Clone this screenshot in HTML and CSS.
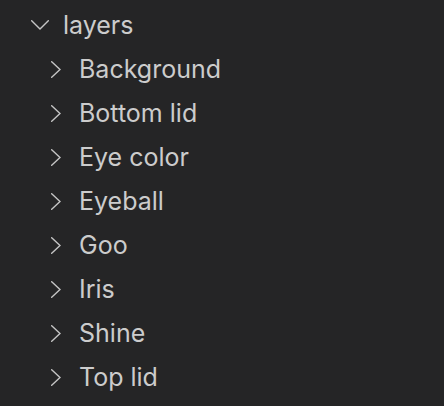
FILE: index.html
```html
<!DOCTYPE html>
<html>
<head>
<meta charset="utf-8">
<link rel="stylesheet" href="styles.css">
</head>
<body>
<div class="tree">
  <div class="row root">
    <svg class="chev-down" width="18" height="10" viewBox="0 0 18 10"><polyline points="0.7,0.7 9,9 17.3,0.7" /></svg>
    <span class="label">layers</span>
  </div>
  <div class="row child">
    <svg class="chev-right" width="10" height="17" viewBox="0 0 10 17"><polyline points="0.7,0.7 9,8.5 0.7,16.3" /></svg>
    <span class="label">Background</span>
  </div>
  <div class="row child">
    <svg class="chev-right" width="10" height="17" viewBox="0 0 10 17"><polyline points="0.7,0.7 9,8.5 0.7,16.3" /></svg>
    <span class="label">Bottom lid</span>
  </div>
  <div class="row child">
    <svg class="chev-right" width="10" height="17" viewBox="0 0 10 17"><polyline points="0.7,0.7 9,8.5 0.7,16.3" /></svg>
    <span class="label">Eye color</span>
  </div>
  <div class="row child">
    <svg class="chev-right" width="10" height="17" viewBox="0 0 10 17"><polyline points="0.7,0.7 9,8.5 0.7,16.3" /></svg>
    <span class="label">Eyeball</span>
  </div>
  <div class="row child">
    <svg class="chev-right" width="10" height="17" viewBox="0 0 10 17"><polyline points="0.7,0.7 9,8.5 0.7,16.3" /></svg>
    <span class="label">Goo</span>
  </div>
  <div class="row child">
    <svg class="chev-right" width="10" height="17" viewBox="0 0 10 17"><polyline points="0.7,0.7 9,8.5 0.7,16.3" /></svg>
    <span class="label">Iris</span>
  </div>
  <div class="row child">
    <svg class="chev-right" width="10" height="17" viewBox="0 0 10 17"><polyline points="0.7,0.7 9,8.5 0.7,16.3" /></svg>
    <span class="label">Shine</span>
  </div>
  <div class="row child">
    <svg class="chev-right" width="10" height="17" viewBox="0 0 10 17"><polyline points="0.7,0.7 9,8.5 0.7,16.3" /></svg>
    <span class="label">Top lid</span>
  </div>
</div>
</body>
</html>
```
FILE: styles.css
```css
html, body {
  margin: 0;
  padding: 0;
  background: #252526;
  width: 444px;
  height: 406px;
  overflow: hidden;
}
.tree {
  padding-top: 3px;
  font-family: Inter, "Liberation Sans", sans-serif;
  font-size: 25px;
  color: #cccccc;
}
.row {
  display: flex;
  align-items: center;
  height: 44px;
}
.row svg polyline {
  fill: none;
  stroke: #c5c5c5;
  stroke-width: 1.4;
  stroke-linecap: round;
  stroke-linejoin: miter;
}
.root {
  padding-left: 31px;
}
.root .chev-down {
  margin-right: 14px;
}
.child {
  padding-left: 51px;
}
.child .chev-right {
  margin-right: 18px;
}
.label {
  line-height: 1;
}
```
